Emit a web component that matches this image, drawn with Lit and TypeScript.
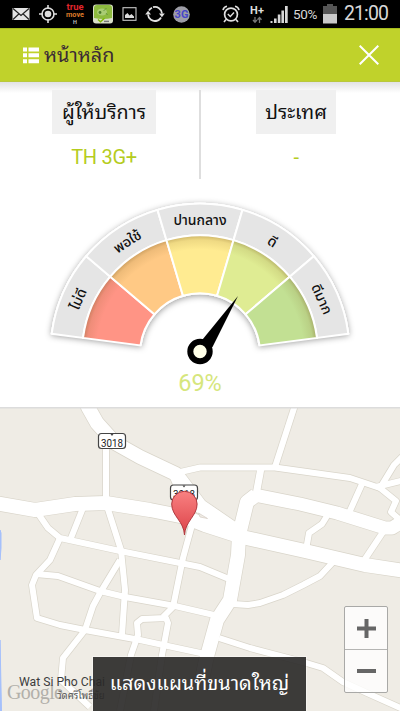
import { LitElement, html, svg, css } from "lit";
import { customElement, property } from "lit/decorators.js";

const THAI = css`Roboto, "Noto Sans Thai Looped", "Noto Sans", "Open Sans", sans-serif`;
const THAI_PLAIN = css`"Noto Sans Thai", "Noto Sans", sans-serif`;

@customElement("status-bar")
export class StatusBar extends LitElement {
  static override styles = css`
    :host {
      display: flex;
      justify-content: space-between;
      align-items: center;
      box-sizing: border-box;
      height: 28px;
      padding: 0 11px 0 12px;
      background: #000;
      color: #d8d8d8;
      font-family: Roboto, sans-serif;
    }

    .side {
      display: flex;
      align-items: center;
    }

    .left {
      gap: 9px;
    }

    .right {
      gap: 5px;
    }

    svg {
      display: block;
      overflow: visible;
    }

    .percent {
      width: 25px;
      font-size: 13.5px;
      letter-spacing: -0.3px;
    }

    .time {
      width: 45px;
      margin-left: 2px;
      font-size: 19.5px;
      line-height: 28px;
      letter-spacing: -0.9px;
      white-space: nowrap;
    }

    .alarm {
      margin-right: 5px;
    }
  `;

  override render() {
    return html`
      <div class="side left">
        <svg width="18" height="14" viewBox="0 0 18 14">
          <rect x="0.5" y="1" width="17" height="12" fill="#e4e4e4" />
          <path d="M1 1.5 9 8.5 17 1.5M1 12.5 6.8 7M17 12.5 11.2 7" fill="none" stroke="#222" stroke-width="1.2" />
        </svg>
        <svg width="18" height="18" viewBox="0 0 18 18">
          <circle cx="9" cy="9" r="6" fill="none" stroke="#ddd" stroke-width="1.6" />
          <circle cx="9" cy="9" r="3.3" fill="#ddd" />
          <path d="M9 0v4M9 14v4M0 9h4M14 9h4" stroke="#ddd" stroke-width="1.6" />
        </svg>
        <svg width="18" height="22" viewBox="0 0 18 22">
          <text x="9" y="7" text-anchor="middle" textLength="17" lengthAdjust="spacingAndGlyphs" font-size="8.5" font-weight="700" fill="#e0262c">true</text>
          <text x="9" y="13.7" text-anchor="middle" textLength="18" lengthAdjust="spacingAndGlyphs" font-size="8" font-weight="700" fill="#dd7a2a">move</text>
          <text x="9" y="20.5" text-anchor="middle" font-size="5.5" font-weight="700" fill="#bbb">H</text>
        </svg>
        <svg width="20" height="20" viewBox="0 0 20 20">
          <rect x="0" y="0.5" width="20" height="19" rx="3" fill="#d9e0c8" />
          <path d="M1 4a3 3 0 0 1 3-3h12a3 3 0 0 1 3 3v10q-9 2-18 0z" fill="#8dba3f" />
          <ellipse cx="9" cy="8" rx="5" ry="3.6" fill="#a9cc74" />
          <circle cx="7" cy="8.5" r="1.4" fill="#4a7a2a" />
          <path d="M10.500 7 13.500 4M13 9l1.500 2" stroke="#5b8b3a" stroke-width="0.8" />
          <path d="M5 15.5l2.5 2.2 4-3.5" fill="none" stroke="#7fb800" stroke-width="1.5" />
          <path d="M11 17.4h5" stroke="#777" stroke-width="1.4" />
        </svg>
        <svg width="15" height="14" viewBox="0 0 15 14">
          <rect x="1" y="0.7" width="13" height="12.6" fill="none" stroke="#c8c8c8" stroke-width="1.1" />
          <path d="M3 11V8l2.5-2 2 2.5L9.5 7 12 9.5V11z" fill="#ddd" />
        </svg>
        <svg width="18" height="18" viewBox="0 0 18 18">
          <path d="M7 2.200A7 7 0 0 1 16 8.500M15 12.500A7 7 0 0 1 8.500 16M11 15.800A7 7 0 0 1 2 9.500M3 5.500A7 7 0 0 1 6 2.700" fill="none" stroke="#e0e0e0" stroke-width="1.8" />
          <path d="M13 8.500h5.800l-2.900 3.800zM5 9.500h-5.800l2.900-3.800z" fill="#e0e0e0" />
        </svg>
        <svg width="17" height="17" viewBox="0 0 17 17">
          <circle cx="8.5" cy="8.5" r="8.3" fill="#9d9da6" />
          <text x="8.5" y="12.3" text-anchor="middle" font-size="11" font-weight="700" fill="#4646c8">3G</text>
        </svg>
      </div>
      <div class="side right">
        <svg class="alarm" width="18" height="18" viewBox="0 0 18 18">
          <circle cx="9" cy="9.5" r="6.4" fill="none" stroke="#e0e0e0" stroke-width="1.7" />
          <path d="M5.8 9 8.3 11.4 12 7.4" fill="none" stroke="#e0e0e0" stroke-width="1.4" />
          <path d="M1 5.2A5 5 0 0 1 5 1.3M13 1.3A5 5 0 0 1 17 5.2M4 14.5 2 17M14 14.5 16 17" fill="none" stroke="#e0e0e0" stroke-width="1.6" />
        </svg>
        <svg width="15" height="19" viewBox="0 0 15 19">
          <text x="0" y="8.6" font-size="11" font-weight="700" fill="#ddd" textLength="14">H+</text>
          <path d="M5 12v5M3 15l2 2.3 2-2.3M9.5 18v-5M7.5 14.8l2-2.3 2 2.3" fill="none" stroke="#777" stroke-width="1.3" />
        </svg>
        <svg width="18" height="18" viewBox="0 0 18 18">
          <path d="M0.5 16h2v2h-2zM4 13.5h2.6V18H4zM7.8 9.5h2.6V18H7.8zM11.4 5.5H14V18h-2.6zM15 1h2.7v17H15z" fill="#d8d8d8" />
        </svg>
        <span class="percent">50%</span>
        <svg width="14" height="20" viewBox="0 0 14 20">
          <path d="M4 0h6v2h4v8H0V2h4z" fill="#555" />
          <rect x="0" y="10" width="14" height="9.5" fill="#c9c9c9" />
        </svg>
        <span class="time">21:00</span>
      </div>
    `;
  }
}

@customElement("title-bar")
export class TitleBar extends LitElement {
  @property() declare text: string;

  static override styles = css`
    :host {
      display: flex;
      align-items: center;
      box-sizing: border-box;
      height: 54px;
      padding: 0 21px 0 23px;
      background: #c0d22b;
      border-top: 1px solid #a6bd1c;
      border-bottom: 1px solid #b9c83c;
    }

    .title {
      flex: 1;
      margin: 0 0 0 5px;
      color: #3a2b35;
      font: 400 19.8px/51px ${THAI};
    }
  `;

  override render() {
    return html`
      <svg width="16" height="17" viewBox="0 0 16 17">
        <path d="M0 0.5h4v4H0zM5.5 0.5H16v4H5.5zM0 6.3h4v4H0zM5.5 6.3H16v4H5.5zM0 12.2h4v4H0zM5.5 12.2H16v4H5.5z" fill="#fff" />
      </svg>
      <h1 class="title">${this.text}</h1>
      <svg width="20" height="20" viewBox="0 0 20 20">
        <path d="M0.7 0.7 19.3 19.3M19.3 0.7 0.7 19.3" stroke="#fff" stroke-width="2" />
      </svg>
    `;
  }
}

@customElement("info-cell")
export class InfoCell extends LitElement {
  @property() declare label: string;
  @property() declare value: string;

  static override styles = css`
    :host {
      display: flex;
      flex-direction: column;
      align-items: center;
    }

    .label {
      box-sizing: border-box;
      height: 44px;
      padding: 0 9.5px;
      background: #f0f0f0;
      color: #111;
      font: 400 19.7px/46px ${THAI};
      white-space: nowrap;
    }

    .value {
      margin-top: 9px;
      color: #b5cc1e;
      font: 400 20px/28px Roboto, sans-serif;
      letter-spacing: -0.3px;
    }
  `;

  override render() {
    return html`
      <span class="label">${this.label}</span>
      <span class="value">${this.value}</span>
    `;
  }
}

const LEVELS = [
  { label: "ไม่ดี", color: "#ff9485" },
  { label: "พอใช้", color: "#ffc985" },
  { label: "ปานกลาง", color: "#ffeb91" },
  { label: "ดี", color: "#dfec93" },
  { label: "ดีมาก", color: "#c2e093" },
];

const CX = 160;
const CY = 160.3;
const START = 172.5;
const STEP = 33;

function polar(r: number, deg: number) {
  const a = (deg * Math.PI) / 180;
  return `${(CX + r * Math.cos(a)).toFixed(2)} ${(CY - r * Math.sin(a)).toFixed(2)}`;
}

function ring(r1: number, r2: number, from: number, to: number) {
  return `M${polar(r2, from)}A${r2} ${r2} 0 0 1 ${polar(r2, to)}L${polar(r1, to)}A${r1} ${r1} 0 0 0 ${polar(r1, from)}Z`;
}

@customElement("signal-gauge")
export class SignalGauge extends LitElement {
  @property({ type: Number }) declare value: number;

  static override styles = css`
    :host {
      display: flex;
      flex-direction: column;
      align-items: center;
    }

    svg {
      display: block;
      overflow: visible;
    }

    .name {
      font: 500 14px ${THAI_PLAIN};
      fill: #111;
      text-anchor: middle;
    }

    .value {
      margin-top: -8px;
      color: #d6e67c;
      font: 400 23.5px/28px Roboto, sans-serif;
    }
  `;

  override render() {
    return html`
      <svg width="320" height="184" viewBox="0 0 320 184">
        <defs>
          <radialGradient id="shade" gradientUnits="userSpaceOnUse" cx=${CX} cy=${CY} r="118">
            <stop offset="0.88" stop-color="#7a5a20" stop-opacity="0" />
            <stop offset="0.96" stop-color="#7a5a20" stop-opacity="0.12" />
            <stop offset="1" stop-color="#7a5a20" stop-opacity="0.38" />
          </radialGradient>
          <filter id="drop" x="-10%" y="-10%" width="120%" height="130%">
            <feDropShadow dx="0" dy="1.5" stdDeviation="3" flood-color="#000" flood-opacity="0.4" />
          </filter>
        </defs>
        <path d=${ring(59, 150.5, START, 7.5)} fill="#fff" filter="url(#drop)" />
        ${LEVELS.map((level, i) => {
          const from = START - i * STEP;
          const to = from - STEP;
          return svg`
            <path d=${ring(118, 149.6, from, to)} fill="#e5e5e5" stroke="#fff" stroke-width="2" />
            <path d=${ring(60, 118, from, to)} fill=${level.color} />
            <path d=${ring(60, 118, from, to)} fill="url(#shade)" stroke="#fff" stroke-width="2" />
          `;
        })}
        ${LEVELS.map((level, i) => {
          const mid = START - (i + 0.5) * STEP;
          return svg`
            <g transform="rotate(${90 - mid} ${CX} ${CY})">
              <text class="name" x=${CX} y=${CY - 128.5}>${level.label}</text>
            </g>
          `;
        })}
        <path d="M198 103 172.500 154 160 158 160.500 149z" fill="#000" />
        <circle cx="160" cy="158.5" r="9.7" fill="#ffffe8" stroke="#000" stroke-width="6" />
      </svg>
      <span class="value">${this.value}%</span>
    `;
  }
}

// [stroke width, path] in screen coordinates
const ROADS: [number, string][] = [
  [14, "M84 395 88 407 97 423 115 443 140 457 176 474 200 506 238 532"],
  [14, "M176 474 187 500 187 515"],
  [14, "M-5 503 35 510 75 504 106 503 150 510 185 517 205 525 242 537 305 551 365 565 405 571"],
  [14, "M256 495 247 502 239 535 238 555 230 600 217 620 206 660 200 690"],
  [13, "M255 495 300 504 337 513 385 528 392 528 405 520"],
  [7, "M261 468 256 495"],
  [6, "M176 473 200 467.500 275 467.500 350 478 380 488"],
  [6, "M296 402 275 467"],
  [6, "M362 484 349 513"],
  [6, "M327 516 322 524 309 533 306 550"],
  [6, "M380 488 394 465 405 454"],
  [6, "M376 487 405 480"],
  [6, "M380 488 396 501 391 512 400 520"],
  [6, "M383 532 363 562"],
  [6, "M333 562 320 576 303 585 283 595 260 603 248 605 233 604"],
  [6, "M219 638 250 648 303 662 323 668 343 682 367 693 405 710"],
  [6, "M106 446 106 502"],
  [6, "M106 503 121 550 125 590 122 635"],
  [6, "M120 560 100 593 93 606 85 630 63 658 61 680 90 707"],
  [6, "M83 508 71 538"],
  [6, "M37 512 48 528 60 538 120 551 200 567 229 579"],
  [6, "M60 538 50 560 36 575 32 585 37 618 60 625 85 630 140 640 205 654"],
  [6, "M36 574 58 576 100 591 125 597 175 606 214 615"],
  [6, "M192 525 183 558 173 607 163 617"],
  [6, "M120 711 131 655 138 635 137 623 142 619 166 618 168 623 162 655 154 711"],
];

@customElement("road-map")
export class RoadMap extends LitElement {
  static override styles = css`
    :host {
      display: block;
      position: relative;
      box-sizing: border-box;
      height: 304px;
      overflow: hidden;
      background: #efece5;
    }

    .canvas {
      display: block;
    }

    .casing {
      stroke: #d9d5ca;
      fill: none;
      stroke-linejoin: round;
    }

    .road {
      stroke: #fff;
      fill: none;
      stroke-linejoin: round;
    }

    .shield {
      font: 400 11px Roboto, sans-serif;
      fill: #222;
      text-anchor: middle;
    }

    .place {
      font: 400 12.5px Roboto, sans-serif;
      fill: #3c3c3c;
    }

    .thai {
      font: 400 9.5px ${THAI};
      fill: #555;
    }

    .brand {
      font: 400 20px "Liberation Serif", serif;
      fill: #b2b0aa;
    }

    .expand {
      position: absolute;
      left: 93px;
      bottom: 0;
      width: 213px;
      height: 54px;
      padding: 0;
      border: 0;
      background: rgba(42, 41, 40, 0.91);
      box-shadow: 0 0 0 1px rgba(255, 255, 255, 0.4);
      color: #fff;
      font: 400 19.9px/54px ${THAI};
      text-align: center;
      white-space: nowrap;
    }

    .zoom {
      position: absolute;
      right: 12px;
      bottom: 18px;
      display: flex;
      flex-direction: column;
      box-sizing: border-box;
      width: 44px;
      height: 87px;
      border: 1px solid #a9a9a7;
      border-radius: 2px;
      background: rgba(255, 255, 255, 0.8);
    }

    .zoom svg {
      display: block;
      flex: 1;
      width: 42px;
    }

    .zoom svg + svg {
      border-top: 1px solid #b5b5b3;
    }
  `;

  override render() {
    return html`
      <svg class="canvas" width="400" height="304" viewBox="0 407 400 304">
        <path d="M0 530 1 533V548L0 560zM0 640 1.500 711H0z" fill="#a5c0fb" stroke="#a5c0fb" />
        ${ROADS.map(([w, d]) => svg`<path class="casing" d=${d} stroke-width=${w + 1.4} />`)}
        ${ROADS.map(([w, d]) => svg`<path class="road" d=${d} stroke-width=${w} />`)}
        <path d="M198.500 513 207.500 518.500 200 517z" fill="#efece5" stroke="#d5cbc3" stroke-width="0.7" />
        <path d="M0 407.500H400" stroke="#dcdcdc" stroke-width="2" />
        ${[[112, 441], [184, 492.5]].map(
          ([x, y]) => svg`
            <rect x=${x - 13.5} y=${y - 7.5} width="27" height="15" rx="3" fill="#fff" stroke="#444" stroke-width="1.2" />
            <path d="M${x - 1.5} ${y - 7}h3l-1.500 2z" fill="#444" />
            <text class="shield" x=${x} y=${y + 5.5} textLength="22" lengthAdjust="spacingAndGlyphs">3018</text>
          `
        )}
        <defs>
          <linearGradient id="pin" x1="0" y1="0" x2="0" y2="1">
            <stop offset="0" stop-color="#f98181" />
            <stop offset="1" stop-color="#dc4248" />
          </linearGradient>
        </defs>
        <path d="M184.500 535C183.800 521 171.700 516 171.700 504A12.700 12.700 0 0 1 197.100 504C197.100 516 185.200 521 184.500 535Z" fill="url(#pin)" stroke="#b0383e" />
        <text class="brand" x="7" y="699" textLength="56">Google</text>
        <text class="place" x="19" y="686" textLength="86" lengthAdjust="spacingAndGlyphs">Wat Si Pho Chai</text>
        <text class="thai" x="57" y="699">วัดศรีโพธิ์ชัย</text>
      </svg>
      <button class="expand">แสดงแผนที่ขนาดใหญ่</button>
      <div class="zoom">
        <svg viewBox="0 0 42 42"><path d="M12 21.500H31M21.500 12V31" stroke="#666" stroke-width="4" /></svg>
        <svg viewBox="0 0 42 42"><path d="M12 21H31" stroke="#666" stroke-width="4" /></svg>
      </div>
    `;
  }
}

@customElement("app-root")
export class AppRoot extends LitElement {
  static override styles = css`
    :host {
      display: flex;
      flex-direction: column;
      width: 400px;
      height: 711px;
      overflow: hidden;
      background: #fff;
    }

    .info {
      display: grid;
      grid-template-columns: 201px 1fr;
      box-sizing: border-box;
      height: 111px;
      padding-top: 8px;
      background: linear-gradient(#e2e2e4, #fff 11px);
    }

    .provider {
      height: 89px;
      padding-left: 9px;
      border-right: 2px solid #dedede;
    }

    .country {
      padding-right: 9px;
    }

    .meter {
      flex: 1;
    }
  `;

  override render() {
    return html`
      <status-bar></status-bar>
      <title-bar text="หน้าหลัก"></title-bar>
      <div class="info">
        <info-cell class="provider" label="ผู้ให้บริการ" value="TH 3G+"></info-cell>
        <info-cell class="country" label="ประเทศ" value="-"></info-cell>
      </div>
      <signal-gauge class="meter" .value=${69}></signal-gauge>
      <road-map></road-map>
    `;
  }
}
